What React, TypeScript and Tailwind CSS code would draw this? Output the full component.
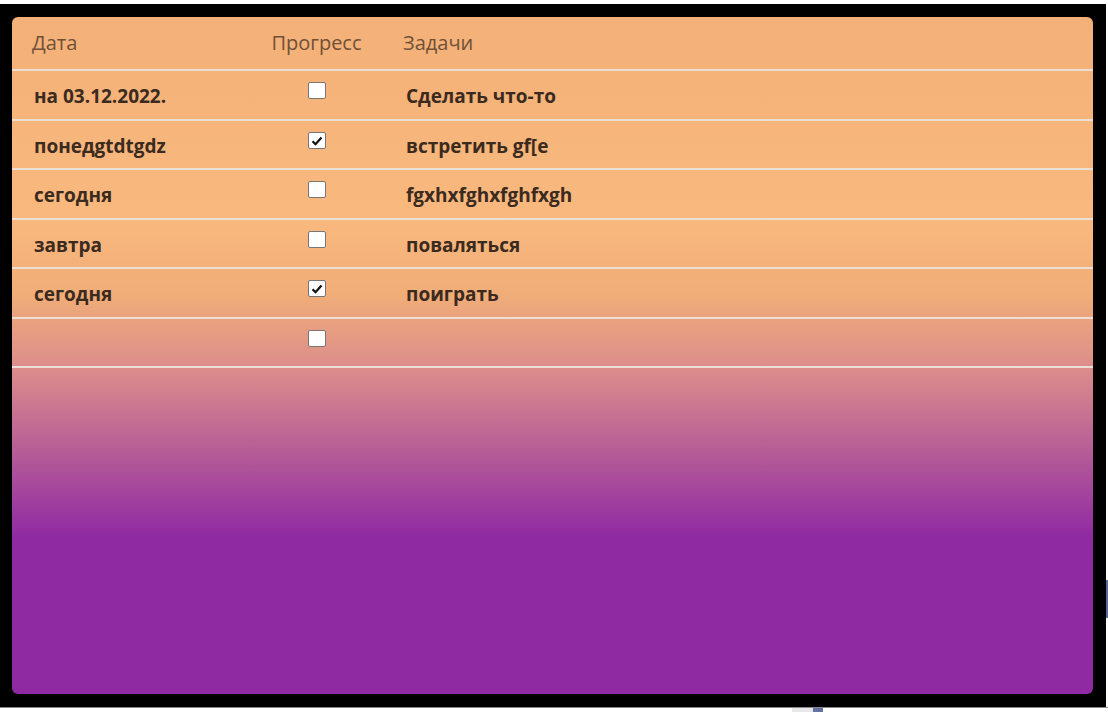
import React, { useState } from 'react';

interface Task {
  id: number;
  date: string;
  done: boolean;
  title: string;
}

const initialTasks: Task[] = [
  { id: 1, date: 'на 03.12.2022.', done: false, title: 'Сделать что-то' },
  { id: 2, date: 'понедgtdtgdz', done: true, title: 'встретить gf[e' },
  { id: 3, date: 'сегодня', done: false, title: 'fgxhxfghxfghfxgh' },
  { id: 4, date: 'завтра', done: false, title: 'поваляться' },
  { id: 5, date: 'сегодня', done: true, title: 'поиграть' },
  { id: 6, date: '', done: false, title: '' },
];

function Check({ checked, onToggle }: { checked: boolean; onToggle: () => void }) {
  return (
    <button
      type="button"
      onClick={onToggle}
      className="w-[18px] h-[17px] bg-white border border-[#767676] rounded-[2px] flex items-center justify-center"
    >
      {checked && (
        <svg width="12" height="10" viewBox="0 0 12 10">
          <path d="M1.5 5.2 L4.5 8.2 L10.5 1.5" fill="none" stroke="#111" strokeWidth="2.2" />
        </svg>
      )}
    </button>
  );
}

export default function App() {
  const [tasks, setTasks] = useState<Task[]>(initialTasks);

  const toggle = (id: number) => {
    setTasks((prev) => prev.map((t) => (t.id === id ? { ...t, done: !t.done } : t)));
  };

  return (
    <div className="w-[1108px] h-[712px] bg-white flex flex-col overflow-hidden font-['Open_Sans',sans-serif]">
      <div className="h-[4px] shrink-0" />
      <div className="flex shrink-0">
        <div className="w-[1106px] h-[703px] bg-black pl-[12px] pt-[13px]">
          <div className="w-[1081px] h-[677px] rounded-[6px] bg-[linear-gradient(to_bottom,#f3b078_0%,#f9b97e_30%,#f0ad78_41%,#dc8c8c_52%,#8f2aa3_77%,#8f2aa3_100%)]">
            {/* header */}
            <div className="grid grid-cols-[238px_133px_1fr] h-[54px] items-center border-b-2 border-[#ece0d6] text-[20px] text-[#6f5038]">
              <div className="pl-[20px]">Дата</div>
              <div className="text-center">Прогресс</div>
              <div className="pl-[20px]">Задачи</div>
            </div>
            {tasks.map((t, i) => (
              <div
                key={t.id}
                className={`grid grid-cols-[238px_133px_1fr] border-b-2 border-[#ece0d6] text-[19px] font-bold text-[#3b2a1e] ${i % 2 === 0 ? 'h-[50px]' : 'h-[49px]'}`}
              >
                <div className="pl-[22px] pt-[12px] leading-[26px]">{t.date}</div>
                <div className="flex justify-center pt-[11px]">
                  <Check checked={t.done} onToggle={() => toggle(t.id)} />
                </div>
                <div className="pl-[23px] pt-[12px] leading-[26px]">{t.title}</div>
              </div>
            ))}
          </div>
        </div>
        <div className="flex-1 flex flex-col">
          <div className="h-[576px]" />
          <div className="h-[38px] w-[2px] bg-[#5d6b9a]" />
        </div>
      </div>
      <div className="h-[1px] bg-[#8a8a8a] shrink-0" />
      <div className="flex shrink-0">
        <div className="w-[792px]" />
        <div className="w-[21px] h-[5px] bg-[#e8e8e8]" />
        <div className="w-[10px] h-[5px] bg-[#6572a0]" />
      </div>
    </div>
  );
}
